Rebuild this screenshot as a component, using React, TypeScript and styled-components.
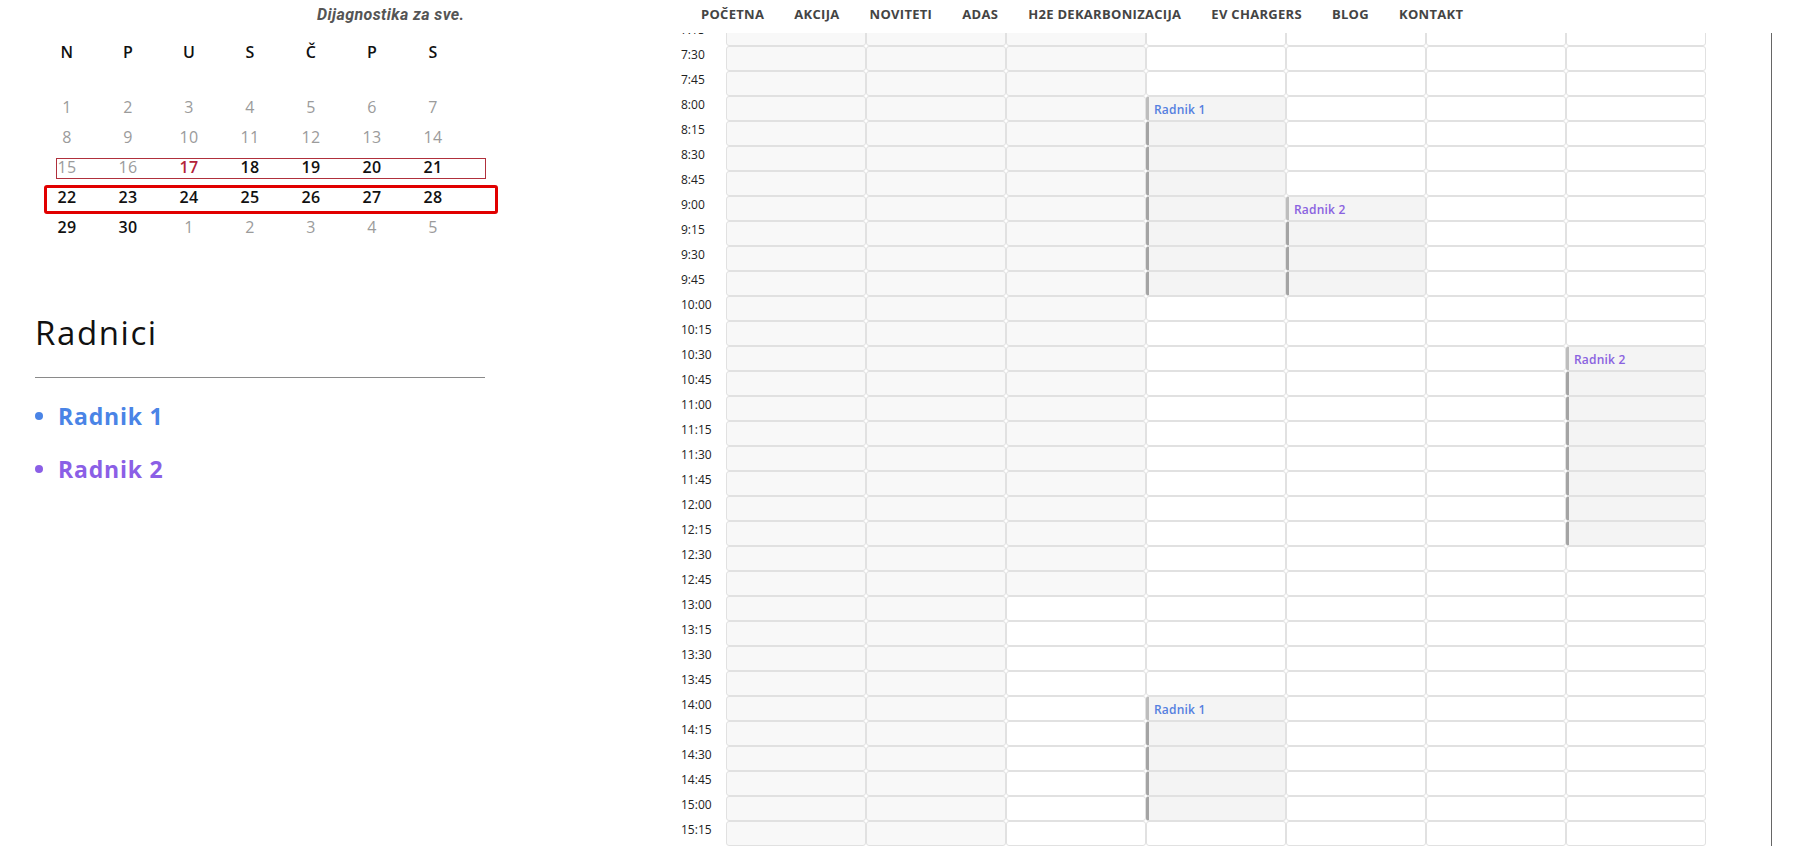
import React from 'react';
import styled, { createGlobalStyle, css } from 'styled-components';

const GlobalStyle = createGlobalStyle`
  html, body { margin: 0; padding: 0; background: #fff; }
  body { font-family: 'Open Sans', 'Liberation Sans', sans-serif; color: #111; overflow: hidden; }
  *, *::before, *::after { box-sizing: border-box; }
`;

const FONT = `'Open Sans', 'Liberation Sans', sans-serif`;

const Page = styled.div`
  width: 1810px;
  height: 846px;
  display: flex;
  flex-direction: column;
  overflow: hidden;
`;

const TopBar = styled.header`
  flex: none;
  height: 33px;
  display: flex;
  background: #fff;
  position: relative;
  z-index: 2;
`;

const Brand = styled.div`
  width: 672px;
  flex: none;
  padding: 5px 0 0 317px;
  font: italic 700 16px Roboto, 'Liberation Sans', sans-serif;
  color: #555;
  letter-spacing: 0.4px;
`;

const Nav = styled.nav`
  display: flex;
  gap: 30px;
  padding: 5px 0 0 29px;
`;

const NavLink = styled.a`
  font: 700 13px ${FONT};
  letter-spacing: 0.3px;
  color: #444;
  text-decoration: none;
  text-transform: uppercase;
`;

const Body = styled.div`
  flex: 1;
  min-height: 0;
  display: flex;
`;

const Sidebar = styled.aside`
  width: 672px;
  flex: none;
  padding: 4px 0 0 35px;
`;

const CalRow = styled.div<{ $mark?: 'today' | 'picked' }>`
  display: grid;
  grid-template-columns: repeat(7, 61px);
  height: 30px;
  margin-left: 1.5px;
  align-items: center;
  justify-items: center;
  position: relative;
  font: 500 16px ${FONT};
  letter-spacing: 0.3px;

  ${(p) =>
    p.$mark === 'today' &&
    css`
      &::after {
        content: '';
        position: absolute;
        left: 19px;
        width: 430px;
        top: 6px;
        bottom: 3px;
        border: 1px solid #b0303c;
      }
    `}

  ${(p) =>
    p.$mark === 'picked' &&
    css`
      &::after {
        content: '';
        position: absolute;
        left: 7px;
        width: 454px;
        top: 3px;
        bottom: -2px;
        border: 3px solid #e10000;
        border-radius: 3px;
      }
    `}
`;

const CalHead = styled(CalRow)`
  font-weight: 600;
  margin-bottom: 25px;
`;

const Day = styled.span<{ $tone: 'muted' | 'today' | 'normal' }>`
  color: ${(p) => (p.$tone === 'muted' ? '#9b9b9b' : p.$tone === 'today' ? '#b3223a' : '#111')};
  font-weight: ${(p) => (p.$tone === 'muted' ? 500 : 600)};
`;

const Heading = styled.h2`
  margin: 71px 0 0;
  font: 500 33px/40px ${FONT};
  letter-spacing: 1.6px;
  color: #111;
`;

const Rule = styled.hr`
  width: 450px;
  margin: 24px 0 23px;
  border: 0;
  border-top: 1px solid #8a8a8a;
`;

const WorkerList = styled.ul`
  list-style: none;
  margin: 0;
  padding: 0;
`;

const Worker = styled.li<{ $color: string }>`
  display: flex;
  align-items: center;
  gap: 15px;
  height: 30px;
  margin-bottom: 23px;
  font: 700 23px ${FONT};
  letter-spacing: 0.8px;
  color: ${(p) => p.$color};

  &::before {
    content: '';
    width: 8px;
    height: 8px;
    border-radius: 50%;
    background: ${(p) => p.$color};
  }
`;

const Schedule = styled.section`
  flex: none;
  width: 1099px;
  overflow: hidden;
  padding-left: 9px;
`;

const Grid = styled.div`
  margin-top: -12px;
  display: grid;
  grid-template-columns: 45px repeat(7, 140px);
  grid-auto-rows: 25px;
`;

const TimeLabel = styled.div`
  font: 400 12px/16px ${FONT};
  color: #222;
  padding-top: 1px;
`;

const Slot = styled.div<{ $tone: 'past' | 'free' | 'booked'; $edge?: 'start' | 'cont'; $color?: string }>`
  border: 1px solid #e1e1e1;
  border-radius: 3px;
  background: ${(p) => (p.$tone === 'past' ? '#f8f8f8' : p.$tone === 'booked' ? '#f4f4f4' : '#fff')};
  display: flex;
  align-items: center;
  padding: 2px 0 0 5px;
  font: 600 12px ${FONT};
  letter-spacing: 0.2px;
  color: ${(p) => p.$color ?? '#333'};

  ${(p) =>
    p.$edge &&
    css`
      border-left: 3px solid ${p.$edge === 'start' ? '#bdbdbd' : '#a4a4a4'};
    `}
`;

const Rail = styled.div`
  flex: 1;
  border-left: 1px solid #666;
`;

const navItems = ['Početna', 'Akcija', 'Noviteti', 'ADAS', 'H2E dekarbonizacija', 'EV chargers', 'Blog', 'Kontakt'];

const weekDays = ['N', 'P', 'U', 'S', 'Č', 'P', 'S'];

type Tone = 'muted' | 'today' | 'normal';
const weeks: { days: [number, Tone][]; mark?: 'today' | 'picked' }[] = [
  { days: [1, 2, 3, 4, 5, 6, 7].map((d) => [d, 'muted']) },
  { days: [8, 9, 10, 11, 12, 13, 14].map((d) => [d, 'muted']) },
  {
    mark: 'today',
    days: [
      [15, 'muted'],
      [16, 'muted'],
      [17, 'today'],
      [18, 'normal'],
      [19, 'normal'],
      [20, 'normal'],
      [21, 'normal'],
    ],
  },
  { mark: 'picked', days: [22, 23, 24, 25, 26, 27, 28].map((d) => [d, 'normal']) },
  {
    days: [
      [29, 'normal'],
      [30, 'normal'],
      [1, 'muted'],
      [2, 'muted'],
      [3, 'muted'],
      [4, 'muted'],
      [5, 'muted'],
    ],
  },
];

const WORKERS = {
  r1: { name: 'Radnik 1', color: '#4a84e6', slotColor: '#5580e0' },
  r2: { name: 'Radnik 2', color: '#8b5fe6', slotColor: '#8a62e0' },
};

// Times from 7:15 to 15:15 in quarter-hour steps
const times: string[] = [];
for (let m = 7 * 60 + 15; m <= 15 * 60 + 15; m += 15) {
  times.push(`${Math.floor(m / 60)}:${String(m % 60).padStart(2, '0')}`);
}

const bookings: { day: number; from: string; rows: number; who: keyof typeof WORKERS }[] = [
  { day: 3, from: '8:00', rows: 8, who: 'r1' },
  { day: 4, from: '9:00', rows: 4, who: 'r2' },
  { day: 6, from: '10:30', rows: 8, who: 'r2' },
  { day: 3, from: '14:00', rows: 5, who: 'r1' },
];

const nowIndex = times.indexOf('13:00');

function slotFor(day: number, row: number) {
  for (const b of bookings) {
    const start = times.indexOf(b.from);
    if (b.day === day && row >= start && row < start + b.rows) {
      return { booking: b, first: row === start };
    }
  }
  return null;
}

export default function App() {
  return (
    <Page>
      <GlobalStyle />
      <TopBar>
        <Brand>Dijagnostika za sve.</Brand>
        <Nav>
          {navItems.map((n) => (
            <NavLink key={n} href="#">
              {n}
            </NavLink>
          ))}
        </Nav>
      </TopBar>
      <Body>
        <Sidebar>
          <CalHead>
            {weekDays.map((d, i) => (
              <span key={i}>{d}</span>
            ))}
          </CalHead>
          {weeks.map((w, i) => (
            <CalRow key={i} $mark={w.mark}>
              {w.days.map(([d, t], j) => (
                <Day key={j} $tone={t}>
                  {d}
                </Day>
              ))}
            </CalRow>
          ))}
          <Heading>Radnici</Heading>
          <Rule />
          <WorkerList>
            {Object.values(WORKERS).map((w) => (
              <Worker key={w.name} $color={w.color}>
                {w.name}
              </Worker>
            ))}
          </WorkerList>
        </Sidebar>
        <Schedule>
          <Grid>
            {times.map((t, r) => (
              <React.Fragment key={t}>
                <TimeLabel>{t}</TimeLabel>
                {Array.from({ length: 7 }, (_, d) => {
                  const s = slotFor(d, r);
                  if (s) {
                    const w = WORKERS[s.booking.who];
                    return (
                      <Slot key={d} $tone="booked" $edge={s.first ? 'start' : 'cont'} $color={w.slotColor}>
                        {s.first ? w.name : null}
                      </Slot>
                    );
                  }
                  const past = d < 2 || (d === 2 && r < nowIndex);
                  return <Slot key={d} $tone={past ? 'past' : 'free'} />;
                })}
              </React.Fragment>
            ))}
          </Grid>
        </Schedule>
        <Rail />
      </Body>
    </Page>
  );
}
